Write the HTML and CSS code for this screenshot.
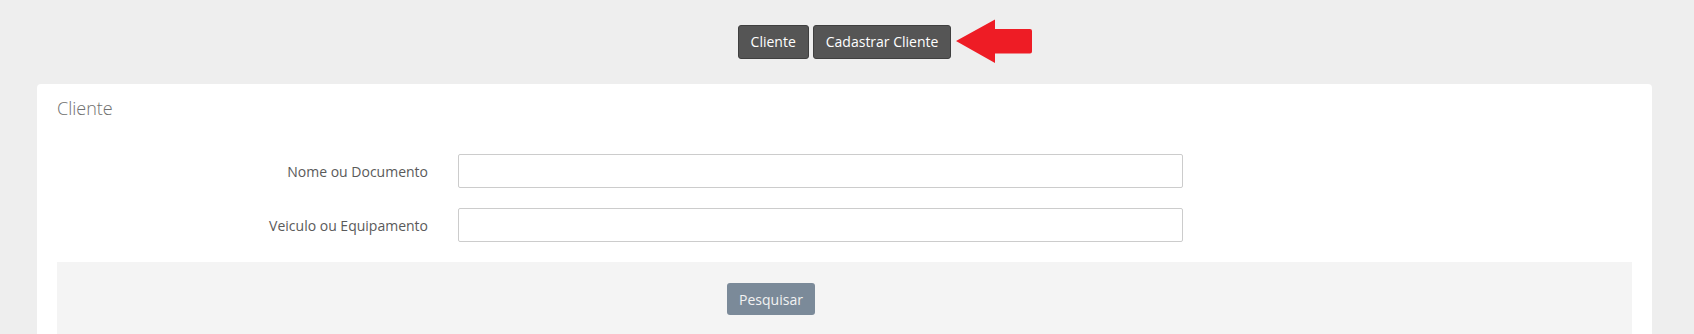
FILE: index.html
```html
<!DOCTYPE html>
<html lang="pt">
<head>
  <meta charset="UTF-8" />
  <title>Cliente</title>
  <link rel="stylesheet" href="styles.css">
</head>
<body>

  <div class="page">
    <!-- Top actions -->
    <div class="toolbar">
      <button type="button" class="btn-dark">Cliente</button>
      <span class="marked">
        <button type="button" class="btn-dark">Cadastrar Cliente</button>
        <svg class="arrow" width="77" height="45" viewBox="0 0 77 45">
          <path d="M0 22 L39 0.5 L39 10 L74 10 Q76 10 76 12 L76 32.5 Q76 34.5 74 34.5 L39 34.5 L39 44 Z" fill="#ee1c25"/>
        </svg>
      </span>
    </div>

    <!-- Search card -->
    <div class="card">
      <div class="card-title">Cliente</div>
      <form class="search-form">
        <div class="form-row">
          <label for="nome">Nome ou Documento</label>
          <input type="text" id="nome" />
        </div>
        <div class="form-row">
          <label for="veiculo">Veiculo ou Equipamento</label>
          <input type="text" id="veiculo" />
        </div>
        <div class="form-footer">
          <button type="submit" class="btn-search">Pesquisar</button>
        </div>
      </form>
    </div>
  </div>

</body>
</html>
```

FILE: styles.css
```css
* {
  box-sizing: border-box;
}

html, body {
  overflow: hidden;
}

body {
  margin: 0;
  background: #eeeeee;
  font-family: 'Open Sans', 'Noto Sans', sans-serif;
  font-size: 14px;
  color: #555555;
}

.page {
  padding: 25px 42px 0 37px;
}

.toolbar {
  display: flex;
  justify-content: center;
  gap: 4px;
  margin-bottom: 25px;
}

.marked {
  position: relative;
  display: flex;
}

.arrow {
  position: absolute;
  left: calc(100% + 5px);
  top: -6px;
}

.btn-dark {
  height: 34px;
  padding: 0 12px;
  background: #555555;
  color: #ffffff;
  border: 1px solid #3f3f3f;
  border-radius: 3px;
  font-family: inherit;
  font-size: 14px;
  line-height: 32px;
  cursor: pointer;
}

.card {
  background: #ffffff;
  border-radius: 4px 4px 0 0;
  padding: 14px 20px 0 20px;
}

.card-title {
  font-size: 18px;
  font-weight: 300;
  line-height: 20px;
  color: #707070;
  margin-bottom: 36px;
}

.form-row {
  display: flex;
  align-items: center;
  margin-bottom: 20px;
}

.form-row label {
  width: 371px;
  margin-right: 30px;
  text-align: right;
  color: #5a5a5a;
}

.form-row input {
  width: 725px;
  height: 34px;
  border: 1px solid #cccccc;
  border-radius: 2px;
  padding: 6px 12px;
  font-family: inherit;
  font-size: 14px;
}

.form-footer {
  background: #f4f4f4;
  padding: 21px 0 19px 670px;
}

.btn-search {
  height: 32px;
  width: 88px;
  padding: 0;
  background: #7b8a99;
  color: #f2f2f2;
  border: none;
  border-radius: 3px;
  font-family: inherit;
  font-size: 14px;
  cursor: pointer;
}
```
